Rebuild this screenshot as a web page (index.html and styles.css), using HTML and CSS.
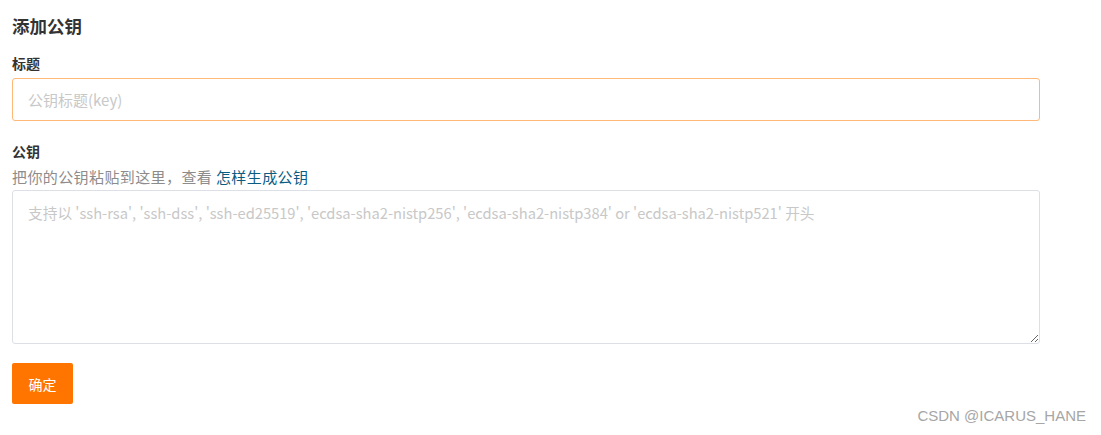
FILE: index.html
```html
<!DOCTYPE html>
<html lang="zh-CN">
<head>
    <meta charset="UTF-8">
    <meta name="viewport" content="width=device-width, initial-scale=1.0">
    <title>添加公钥</title>
    <link rel="stylesheet" href="styles.css">
</head>
<body>
    <div class="page">
        <h3 class="page-title">添加公钥</h3>
        <form class="key-form">
            <div class="field">
                <label class="field-label" for="keyTitle">标题</label>
                <input class="text-input" id="keyTitle" type="text" placeholder="公钥标题(key)" autofocus>
            </div>
            <div class="field field-key">
                <label class="field-label" for="keyBody">公钥</label>
                <div class="field-help">把你的公钥粘贴到这里，查看 <a href="#" class="help-link">怎样生成公钥</a></div>
                <textarea class="text-area" id="keyBody" placeholder="支持以 'ssh-rsa', 'ssh-dss', 'ssh-ed25519', 'ecdsa-sha2-nistp256', 'ecdsa-sha2-nistp384' or 'ecdsa-sha2-nistp521' 开头"></textarea>
            </div>
            <button type="button" class="btn-submit">确定</button>
        </form>
    </div>
    <div class="watermark">CSDN @ICARUS_HANE</div>
</body>
</html>
```

FILE: styles.css
```css
/* 页面基础 */
body {
    margin: 0;
    font-family: "Noto Sans CJK SC", "Liberation Sans", sans-serif;
    color: #333;
    background: #fff;
}
.page {
    padding: 14px 0 0 12px;
    width: 1028px;
}
/* 标题 */
.page-title {
    margin: 0;
    font-size: 17.5px;
    line-height: 24px;
    font-weight: bold;
    color: #333;
}
.field {
    margin-top: 15px;
}
.field-key {
    margin-top: 20px;
}
/* 字段名 */
.field-label {
    display: block;
    font-size: 14px;
    line-height: 20px;
    font-weight: bold;
    color: #333;
}
/* 说明文字 */
.field-help {
    margin-top: 6px;
    font-size: 15px;
    letter-spacing: 0.4px;
    line-height: 20px;
    color: #8c8c8c;
}
.help-link {
    color: #0a5c83;
    text-decoration: none;
}
/* 输入框 */
.text-input {
    display: block;
    box-sizing: border-box;
    width: 100%;
    height: 43px;
    margin-top: 5px;
    padding: 0 15px;
    border: 1px solid #ffb877;
    border-radius: 3px;
    font-family: inherit;
    font-size: 15px;
    color: #333;
    caret-color: #333;
    outline: none;
}
.text-input::placeholder,
.text-area::placeholder {
    color: #c8c8c8;
}
/* 文本域 */
.text-area {
    display: block;
    box-sizing: border-box;
    width: 100%;
    height: 154px;
    margin-top: 3px;
    padding: 12px 15px;
    border: 1px solid #dcdfe6;
    border-radius: 3px;
    font-family: inherit;
    font-size: 14.7px;
    line-height: 20px;
    color: #333;
    outline: none;
}
/* 确定按钮 */
.btn-submit {
    display: block;
    margin-top: 19px;
    width: 61px;
    height: 41px;
    border: none;
    border-radius: 2px;
    background-color: #ff7500;
    color: #fff;
    font-family: inherit;
    font-size: 14px;
    cursor: pointer;
}
/* 水印 */
.watermark {
    position: absolute;
    right: 15px;
    top: 406px;
    white-space: nowrap;
    font-family: "Liberation Sans", sans-serif;
    font-size: 15px;
    line-height: 20px;
    color: #a6a6a6;
}
```
